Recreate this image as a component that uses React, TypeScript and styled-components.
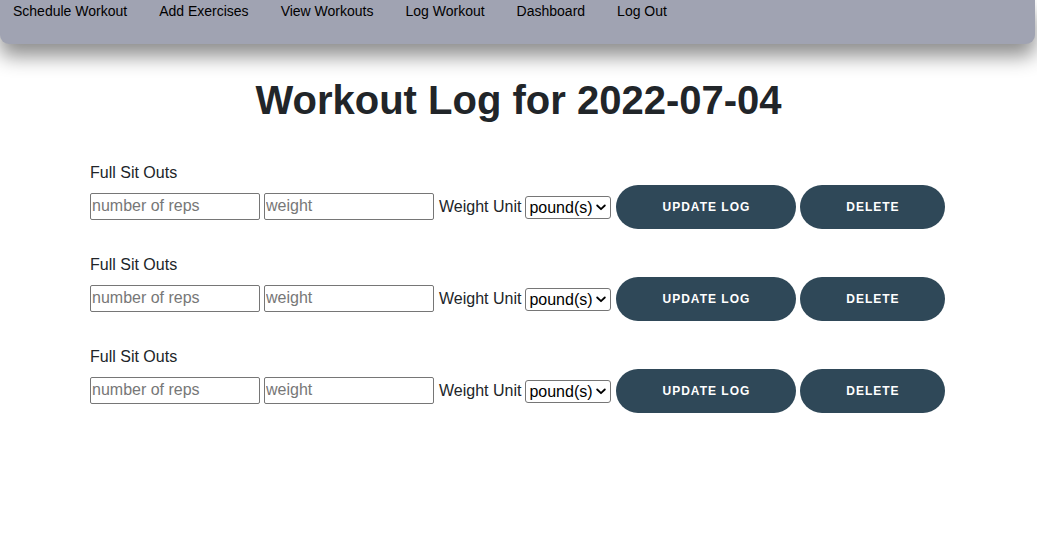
import React from "react";
import styled, { createGlobalStyle } from "styled-components";

const GlobalStyle = createGlobalStyle`
  html, body {
    margin: 0;
    padding: 0;
    background: #ffffff;
    font-family: "Liberation Sans", Arial, Helvetica, sans-serif;
    color: #212529;
  }
`;

const NavBar = styled.nav`
  width: 1035px;
  height: 44px;
  box-sizing: border-box;
  background: #a0a3b2;
  border-radius: 0 0 9px 9px;
  box-shadow: 0 12px 20px rgba(0, 0, 0, 0.45);
  display: flex;
  align-items: flex-start;
  gap: 32px;
  padding: 3px 0 0 13px;
`;

const NavLink = styled.a`
  font-size: 14px;
  line-height: 16px;
  color: #000000;
  text-decoration: none;
  font-family: "Liberation Sans", Arial, sans-serif;
`;

const Title = styled.h1`
  margin: 33px 0 41px;
  text-align: center;
  font-size: 40px;
  font-weight: 700;
  line-height: 46px;
  color: #212529;
`;

const List = styled.div`
  display: flex;
  flex-direction: column;
  gap: 27px;
  padding-left: 90px;
`;

const Entry = styled.div`
  display: flex;
  flex-direction: column;
  gap: 3px;
`;

const ExerciseName = styled.div`
  font-size: 16px;
  line-height: 18px;
  color: #212529;
`;

const Row = styled.div`
  display: flex;
  align-items: center;
  height: 44px;
`;

const TextInput = styled.input`
  box-sizing: border-box;
  width: 170px;
  height: 27px;
  margin: 0 4px 0 0;
  padding: 1px 1px;
  border: 1px solid #767676;
  border-radius: 2px;
  font-size: 16px;
  font-family: "Liberation Sans", Arial, sans-serif;
  color: #000;
  align-self: center;
  transform: translateY(-1px);
  &::placeholder {
    color: #777777;
  }
`;

const UnitLabel = styled.label`
  font-size: 16px;
  color: #212529;
  margin: 0 4px 0 1px;
`;

const Select = styled.select`
  appearance: none;
  -webkit-appearance: none;
  box-sizing: border-box;
  width: 86px;
  height: 23px;
  margin: 0 5px 0 0;
  padding: 0 16px 0 3px;
  border: 1px solid #767676;
  border-radius: 3px;
  background-color: #ffffff;
  background-image: url("data:image/svg+xml;utf8,<svg xmlns='http://www.w3.org/2000/svg' width='10' height='7' viewBox='0 0 10 7'><path d='M1.2 1.5 L5 5.2 L8.8 1.5' fill='none' stroke='black' stroke-width='1.8' stroke-linecap='round' stroke-linejoin='round'/></svg>");
  background-repeat: no-repeat;
  background-position: right 4px center;
  font-size: 16px;
  font-family: "Liberation Sans", Arial, sans-serif;
  color: #000;
`;

const PillButton = styled.button<{ $width: number }>`
  box-sizing: border-box;
  width: ${(p) => p.$width}px;
  height: 44px;
  margin-right: 4px;
  border: none;
  border-radius: 22px;
  background: #2f4858;
  color: #ffffff;
  font-family: "Liberation Sans", Arial, sans-serif;
  font-size: 12px;
  font-weight: 700;
  letter-spacing: 1px;
  text-transform: uppercase;
  cursor: pointer;
`;

const entries = [1, 2, 3];

export default function App() {
  return (
    <>
      <GlobalStyle />
      <NavBar>
        <NavLink href="#">Schedule Workout</NavLink>
        <NavLink href="#">Add Exercises</NavLink>
        <NavLink href="#">View Workouts</NavLink>
        <NavLink href="#">Log Workout</NavLink>
        <NavLink href="#">Dashboard</NavLink>
        <NavLink href="#">Log Out</NavLink>
      </NavBar>
      <Title>Workout Log for 2022-07-04</Title>
      <List>
        {entries.map((i) => (
          <Entry key={i}>
            <ExerciseName>Full Sit Outs</ExerciseName>
            <Row>
              <TextInput type="number" placeholder="number of reps" />
              <TextInput type="number" placeholder="weight" />
              <UnitLabel>Weight Unit</UnitLabel>
              <Select defaultValue="pound">
                <option value="pound">pound(s)</option>
                <option value="kilo">kilo(s)</option>
              </Select>
              <PillButton $width={180}>Update Log</PillButton>
              <PillButton $width={145}>Delete</PillButton>
            </Row>
          </Entry>
        ))}
      </List>
    </>
  );
}
